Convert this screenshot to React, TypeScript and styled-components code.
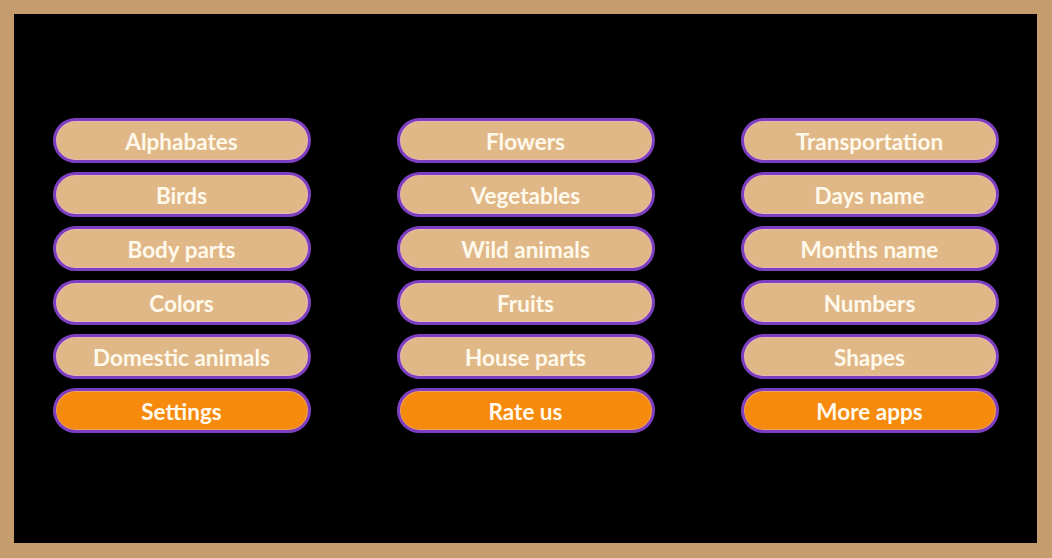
import styled, { createGlobalStyle } from "styled-components";

const GlobalStyle = createGlobalStyle`
  html, body {
    margin: 0;
    padding: 0;
    background: #c59c6e;
  }

  * {
    box-sizing: border-box;
  }
`;

const Frame = styled.div`
  width: 1052px;
  height: 558px;
  padding: 14px 15px 15px 14px;
  background-color: #c59c6e;
`;

const Board = styled.div`
  width: 100%;
  height: 100%;
  background-color: #000;

  display: flex;
  justify-content: center;
  align-items: center;
  padding-bottom: 7px;
`;

const Columns = styled.div`
  display: grid;
  grid-template-columns: repeat(3, 258px);
  column-gap: 86px;
`;

const Column = styled.div`
  display: flex;
  flex-direction: column;
  gap: 9px;
`;

const MenuButton = styled.button<{ $accent?: boolean }>`
  height: 45px;
  width: 100%;
  border: 3px solid #7d3fc2;
  border-radius: 23px;
  background-color: ${(p) => (p.$accent ? "#f68a0c" : "#e0b887")};
  box-shadow: inset 0 0 0 1px ${(p) => (p.$accent ? "#f0a060" : "#e9b7b0")};

  display: flex;
  justify-content: center;
  align-items: center;
  padding: 2px 0 0;

  color: #fff9ec;
  font-family: Lato, "Open Sans", sans-serif;
  font-size: 22.5px;
  font-weight: 700;
  cursor: pointer;
`;

const columns = [
  ["Alphabates", "Birds", "Body parts", "Colors", "Domestic animals"],
  ["Flowers", "Vegetables", "Wild animals", "Fruits", "House parts"],
  ["Transportation", "Days name", "Months name", "Numbers", "Shapes"],
];

const extras = ["Settings", "Rate us", "More apps"];

function App() {
  return (
    <>
      <GlobalStyle />
      <Frame>
        <Board>
          <Columns>
            {columns.map((items, i) => (
              <Column key={i}>
                {items.map((label) => (
                  <MenuButton key={label}>{label}</MenuButton>
                ))}
                <MenuButton $accent>{extras[i]}</MenuButton>
              </Column>
            ))}
          </Columns>
        </Board>
      </Frame>
    </>
  );
}

export default App;
